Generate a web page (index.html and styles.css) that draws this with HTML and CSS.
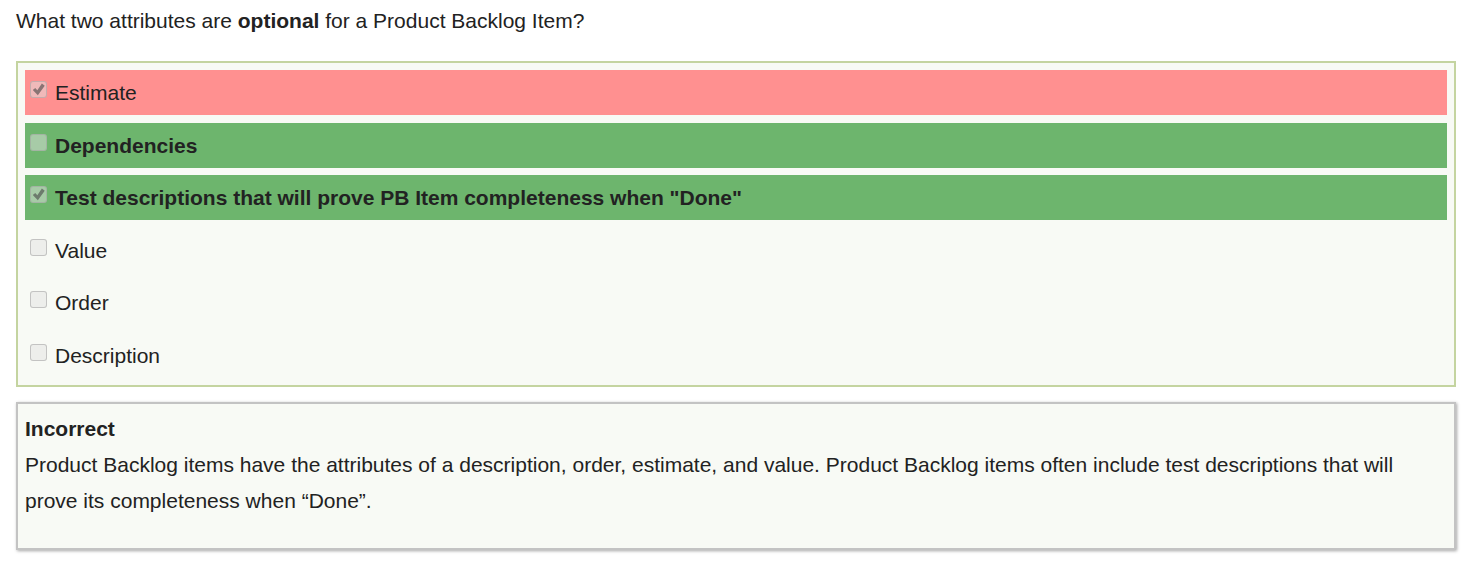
FILE: index.html
```html
<!DOCTYPE html>
<html lang="en">
<head>
<meta charset="utf-8">
<meta name="viewport" content="width=device-width, initial-scale=1">
<title>Quiz question</title>
<link rel="stylesheet" href="styles.css">
</head>
<body>
<main class="quiz">
  <p class="question" id="question">What two attributes are <strong>optional</strong> for a Product Backlog Item?</p>
  <ul class="answers" aria-labelledby="question">
    <li class="answer answer-wrong"><label class="choice"><input class="tick" type="checkbox" checked disabled><span>Estimate</span></label></li>
    <li class="answer answer-right"><label class="choice"><input class="tick" type="checkbox" disabled><span>Dependencies</span></label></li>
    <li class="answer answer-right"><label class="choice"><input class="tick" type="checkbox" checked disabled><span>Test descriptions that will prove PB Item completeness when "Done"</span></label></li>
    <li class="answer"><label class="choice"><input class="tick" type="checkbox" disabled><span>Value</span></label></li>
    <li class="answer"><label class="choice"><input class="tick" type="checkbox" disabled><span>Order</span></label></li>
    <li class="answer"><label class="choice"><input class="tick" type="checkbox" disabled><span>Description</span></label></li>
  </ul>
  <section class="feedback">
    <strong>Incorrect</strong>
    <p class="explanation">Product Backlog items have the attributes of a description, order, estimate, and value. Product Backlog items often include test descriptions that will prove its completeness when “Done”.</p>
  </section>
</main>
</body>
</html>
```
FILE: styles.css
```css
* {
  box-sizing: border-box;
}

body {
  margin: 0;
  background: #fff;
  color: #222;
  font: 21px/36px "Liberation Sans", Arial, sans-serif;
}

.quiz {
  padding: 3px 22px 14px 16px;
}

.question {
  margin: 0 0 22px;
}

.answers {
  margin: 0 0 15px;
  padding: 7px;
  border: 2px solid #c4d4a0;
  background: #f8faf5;
  list-style: none;
}

.answer {
  margin-bottom: 7px;
  padding: 5px;
}

.answer:nth-child(odd) {
  margin-bottom: 8px;
}

.answer:last-child {
  margin-bottom: 0;
}

.answer-wrong {
  background: #ff9090;
}

.answer-right {
  background: #6db56d;
  font-weight: bold;
}

.choice {
  display: flex;
  align-items: flex-start;
  gap: 8px;
  line-height: 35px;
}

.tick {
  appearance: none;
  flex: none;
  display: grid;
  place-items: center;
  width: 17px;
  height: 17px;
  margin: 6px 0 0;
  border: 1px solid rgba(160, 160, 160, 0.55);
  border-radius: 3px;
  background: rgba(225, 225, 225, 0.5);
}

.tick:checked::before {
  content: "";
  width: 13px;
  height: 13px;
  background: rgba(70, 70, 70, 0.6);
  clip-path: polygon(6% 54%, 25% 38%, 41% 56%, 76% 4%, 98% 22%, 45% 94%);
}

.feedback {
  padding: 7px 7px 29px;
  border: 2px solid #c3c3c3;
  background: #f8faf5;
  box-shadow: 1px 1px 3px rgba(0, 0, 0, 0.35);
}

.explanation {
  margin: 0;
}
```
